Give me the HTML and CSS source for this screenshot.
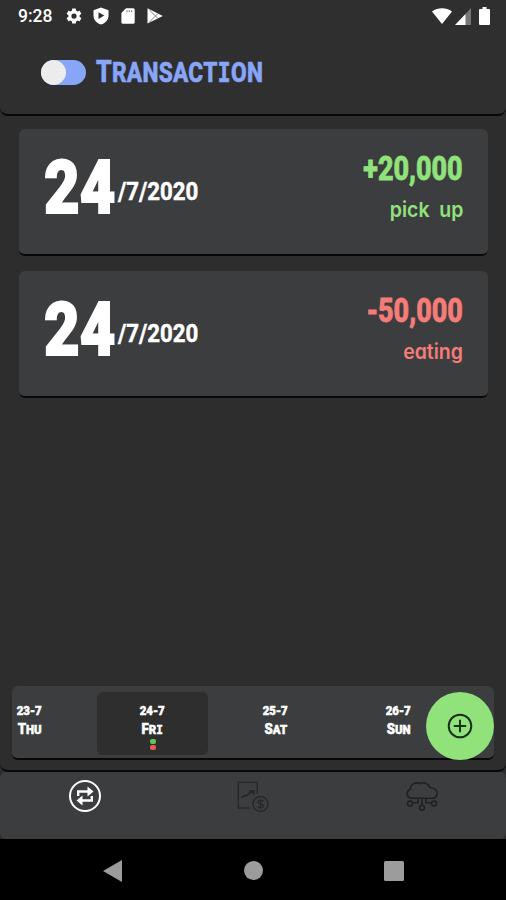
FILE: index.html
```html
<!DOCTYPE html>
<html lang="en">
<head>
    <meta charset="UTF-8">
    <meta name="viewport" content="width=device-width, initial-scale=1.0">
    <title>Transaction</title>
    <link rel="stylesheet" href="styles.css">
</head>
<body>
    <div class="screen">
        <!-- Header -->
        <header class="header">
            <div class="status-bar">
                <span class="clock">9:28</span>
                <div class="status-icons">
                    <svg width="18" height="18" viewBox="0 0 24 24" fill="#fff"><path d="M19.4 13a7.500 7.500 0 0 0 0-2l2.100-1.650a.5.5 0 0 0 .12-.64l-2-3.460a.5.5 0 0 0-.61-.22l-2.490 1a7.300 7.300 0 0 0-1.690-.98l-.38-2.650A.49.49 0 0 0 14 2h-4a.49.49 0 0 0-.49.42l-.38 2.650c-.61.25-1.170.59-1.690.98l-2.490-1a.5.5 0 0 0-.61.22l-2 3.460a.5.5 0 0 0 .12.64L4.570 11a7.900 7.900 0 0 0 0 2l-2.110 1.650a.5.5 0 0 0-.12.64l2 3.460c.12.22.39.3.61.22l2.490-1c.52.4 1.080.73 1.690.98l.38 2.650c.03.24.24.42.49.42h4c.25 0 .46-.18.49-.42l.38-2.650c.61-.25 1.170-.59 1.690-.98l2.490 1c.23.09.49 0 .61-.22l2-3.460a.5.5 0 0 0-.12-.64zM12 15.500a3.500 3.500 0 1 1 0-7 3.500 3.500 0 0 1 0 7z"/></svg>
                    <svg width="18" height="18" viewBox="0 0 18 18"><path fill="#fff" d="M9 .5 16.500 3.300V8.500C16.500 13 13.300 16.300 9 17.600 4.700 16.300 1.500 13 1.500 8.500V3.300z"/><path fill="#2f2f2f" d="M6.500 5.200v6.800l5.800-3.400z"/></svg>
                    <svg width="18" height="18" viewBox="0 0 18 18"><path fill="#fff" d="M7 1.300h7.200A1.500 1.500 0 0 1 15.700 2.800v12.400a1.500 1.500 0 0 1-1.500 1.500H3.900a1.500 1.500 0 0 1-1.500-1.500V6z"/><path stroke="#888" stroke-width="1.200" d="M8 3.200v2M10.300 3.200v2M12.600 3.200v2"/></svg>
                    <svg width="18" height="18" viewBox="0 0 18 18"><path fill="#fff" d="M1.500 1.200 16.800 9 1.500 16.600z"/><path fill="none" stroke="#777" stroke-width=".9" d="M3 2.500l8.500 8.500M3 15.500l8.500-8.500"/></svg>
                </div>
                <div class="status-signal">
                    <svg width="20" height="17" viewBox="0 0 20 17"><path fill="#fff" d="M0 3.500C5.800-.8 14.200-.8 20 3.500L10 16z"/></svg>
                    <svg width="16" height="17" viewBox="0 0 16 17"><path fill="#777" d="M16 0v17H10V6.500z"/><path fill="#fff" d="M0 17 10.500 6v11z"/></svg>
                    <svg width="11" height="18" viewBox="0 0 11 18"><path fill="#fff" d="M3.500 0h4v2H10a1 1 0 0 1 1 1v14a1 1 0 0 1-1 1H1a1 1 0 0 1-1-1V3a1 1 0 0 1 1-1h2.500z"/></svg>
                </div>
            </div>
            <div class="title-row">
                <div class="toggle"><span class="toggle-knob"></span></div>
                <h1 class="title"><span class="title-first">T</span>RANSACT<span class="slab">I</span>ON</h1>
            </div>
        </header>

        <!-- Transactions -->
        <main class="transactions">
            <div class="card">
                <div class="date"><span class="day">24</span><span class="month-year">/7/2020</span></div>
                <div class="entry income">
                    <span class="amount">+20,000</span>
                    <span class="note">pick up</span>
                </div>
            </div>
            <div class="card">
                <div class="date"><span class="day">24</span><span class="month-year">/7/2020</span></div>
                <div class="entry expense">
                    <span class="amount">-50,000</span>
                    <span class="note">eating</span>
                </div>
            </div>
        </main>

        <!-- Day picker -->
        <section class="picker">
            <div class="days">
                <div class="day-item"><span class="day-date">23-7</span><span class="day-name"><b>T</b>HU</span></div>
                <div class="day-item active">
                    <span class="day-date">24-7</span><span class="day-name"><b>F</b>R<span class="slab">I</span></span>
                    <span class="dot green"></span><span class="dot red"></span>
                </div>
                <div class="day-item"><span class="day-date">25-7</span><span class="day-name"><b>S</b>AT</span></div>
                <div class="day-item"><span class="day-date">26-7</span><span class="day-name"><b>S</b>UN</span></div>
            </div>
            <button class="add-btn" aria-label="Add">
                <svg width="26" height="26" viewBox="0 0 26 26" fill="none" stroke="#1c2f1a" stroke-width="2"><circle cx="13" cy="13" r="11.300"/><path d="M13 6.800v12.400M6.800 13h12.400"/></svg>
            </button>
        </section>

        <!-- Tabs -->
        <nav class="tabs">
            <a class="tab">
                <svg width="34" height="34" viewBox="0 0 34 34" fill="none" stroke="#fff" stroke-width="2"><circle cx="17" cy="17" r="15"/><path stroke-width="2.400" d="M10.200 17v-4.500H21M23.800 17v4.500H13"/><path fill="#fff" stroke="none" d="M19.500 7.500 25.500 12.500l-6 5zM14.500 16.500l-6 5 6 5z"/></svg>
            </a>
            <a class="tab">
                <svg width="34" height="34" viewBox="0 0 34 34" fill="none" stroke="#262727" stroke-width="1.300"><path d="M13.500 29H2.300V3.300h19V15"/><path stroke-width="1.600" d="M5.500 19c2.500-4 5-1 6.500-3.500l4-3.500"/><path fill="#262727" stroke="none" d="M12.500 11h6v5.500z"/><circle cx="24.500" cy="25" r="7.500"/><path d="M27.300 22.500c-1-1.500-5.400-1.500-5.400.6 0 2.600 5.500 1.200 5.500 3.800 0 2-4.400 2.200-5.700.4M24.500 20v10"/></svg>
            </a>
            <a class="tab">
                <svg width="34" height="34" viewBox="0 0 34 34" fill="none" stroke="#202121" stroke-width="1.600"><path d="M7 19.300C1 19 .8 12 5.300 10.500 5 5.500 10.500 2.500 14.500 4.700c4-2.200 9-.5 10.300 3.800 5 .3 8 3.500 7.400 6.500-.6 3-2.700 4.300-5.200 4.300z"/><path d="M13 19.500v4.300H7.500M21 19.500v4.300h5.500M17 19.500v7"/><circle cx="5" cy="24.500" r="2.500"/><circle cx="29" cy="24.500" r="2.500"/><circle cx="17" cy="28.800" r="2.500"/></svg>
            </a>
        </nav>

        <!-- System navigation -->
        <footer class="system-nav">
            <svg width="19" height="22" viewBox="0 0 19 22" fill="#9c9c9c"><path d="M0 11 19 0v22z"/></svg>
            <svg width="19" height="19" viewBox="0 0 19 19" fill="#9c9c9c"><circle cx="9.500" cy="9.500" r="9.500"/></svg>
            <svg width="20" height="20" viewBox="0 0 20 20" fill="#9c9c9c"><rect width="20" height="20" rx="1.500"/></svg>
        </footer>
    </div>
</body>
</html>
```
FILE: styles.css
```css
* {
    box-sizing: border-box;
}

body {
    margin: 0;
    background-color: #000;
    font-family: Roboto, sans-serif;
    color: #fff;
}

.screen {
    width: 506px;
    height: 900px;
    display: flex;
    flex-direction: column;
    background-color: #2d2d2d;
    overflow: hidden;
}

/* Header */
.header {
    height: 116px;
    background-color: #2f2f2f;
    border-bottom: 2px solid #080808;
    border-radius: 0 0 8px 8px;
}

.status-bar {
    height: 32px;
    padding: 0 16px 0 18px;
    display: flex;
    align-items: center;
}

.clock {
    width: 47px;
    font-size: 17.5px;
    font-weight: 500;
}

.status-icons {
    display: flex;
    gap: 9px;
}

.status-signal {
    display: flex;
    align-items: center;
    gap: 3px;
    margin-left: auto;
}

.status-signal svg:last-child {
    margin-left: 5px;
}

.title-row {
    display: flex;
    align-items: center;
    height: 80px;
    padding-left: 41px;
}

.toggle {
    width: 45px;
    height: 25px;
    margin-right: 10px;
    border-radius: 13px;
    background-color: #88a6f8;
}

.toggle-knob {
    display: block;
    width: 25px;
    height: 25px;
    border-radius: 50%;
    background-color: #ececec;
}

.title {
    margin: 0;
    font-size: 28px;
    line-height: 32px;
    font-weight: 800;
    letter-spacing: 0.3px;
    color: #88a6f8;
    -webkit-text-stroke: 0.6px #88a6f8;
    white-space: nowrap;
    transform: scaleX(0.81);
    transform-origin: left center;
}

.title-first {
    font-size: 31px;
}

.slab {
    font-family: "DejaVu Sans Mono", monospace;
    font-size: 0.97em;
    line-height: 1;
}

/* Cards */
.transactions {
    flex: 1;
    display: flex;
    flex-direction: column;
    gap: 15px;
    padding: 13px 18px 0 19px;
}

.card {
    height: 127px;
    padding: 0 25px;
    display: flex;
    justify-content: space-between;
    background-color: #3b3d3e;
    border-radius: 6px;
    border-bottom: 2px solid #080808;
}

.date {
    display: flex;
    align-items: baseline;
    padding-top: 13px;
    white-space: nowrap;
}

.day {
    width: 74px;
    font-size: 75px;
    line-height: 90px;
    font-weight: 900;
    -webkit-text-stroke: 2px #fff;
    transform: scaleX(0.82);
    transform-origin: left center;
}

.month-year {
    font-size: 26.5px;
    font-weight: 700;
    -webkit-text-stroke: 0.5px #fff;
    position: relative;
    top: -13px;
    transform: scaleX(0.84);
    transform-origin: left center;
}

.entry {
    display: flex;
    flex-direction: column;
    align-items: flex-end;
    padding-top: 20px;
}

.income {
    color: #91e27b;
}

.expense {
    color: #f57c78;
}

.amount {
    font-size: 32.5px;
    line-height: 40px;
    font-weight: 800;
    -webkit-text-stroke: 0.8px currentColor;
    transform: scaleX(0.83);
    transform-origin: right center;
}

.note {
    font-family: Inter, sans-serif;
    font-feature-settings: "cv11";
    font-size: 20.5px;
    line-height: 41px;
    font-weight: 600;
    word-spacing: 5px;
    transform: scaleX(0.95);
    transform-origin: right center;
}

/* Day picker */
.picker {
    height: 86px;
    padding: 0 12px 11px;
    position: relative;
    border-bottom: 2px solid #080808;
    border-radius: 0 0 8px 8px;
}

.days {
    height: 74px;
    display: flex;
    gap: 12px;
    padding: 6px 0;
    background-color: #3b3d3e;
    border-bottom: 2px solid #080808;
    border-radius: 6px;
    overflow: hidden;
}

.day-item {
    flex: 0 0 111px;
    height: 63px;
    padding-top: 9px;
    display: flex;
    flex-direction: column;
    align-items: center;
    border-radius: 6px;
}

.day-item:first-child {
    margin-left: -38px;
}

.active {
    background-color: #2e2e2e;
}

.day-date,
.day-name {
    font-size: 13px;
    line-height: 19px;
    font-weight: 900;
    -webkit-text-stroke: 0.5px #fff;
    transform: scaleX(0.88);
}

.day-name b {
    font-size: 15px;
}

.dot {
    width: 6px;
    height: 5px;
    border-radius: 2px;
    margin-bottom: 1px;
    flex: none;
}

.green {
    background-color: #62c553;
}

.red {
    background-color: #e65b54;
}

.add-btn {
    position: absolute;
    right: 12px;
    top: 6px;
    width: 68px;
    height: 68px;
    padding: 0;
    border: none;
    border-radius: 50%;
    background-color: #91e27b;
    display: flex;
    align-items: center;
    justify-content: center;
}

/* Tabs */
.tabs {
    height: 67px;
    padding: 7px 0 0 1px;
    display: flex;
    background-color: #3b3d3e;
    border-radius: 6px;
}

.tab {
    flex: 1;
    text-align: center;
}

/* System navigation */
.system-nav {
    height: 61px;
    display: flex;
    align-items: center;
    justify-content: space-between;
    padding: 2px 102px 0 103px;
    background-color: #000;
}
```
